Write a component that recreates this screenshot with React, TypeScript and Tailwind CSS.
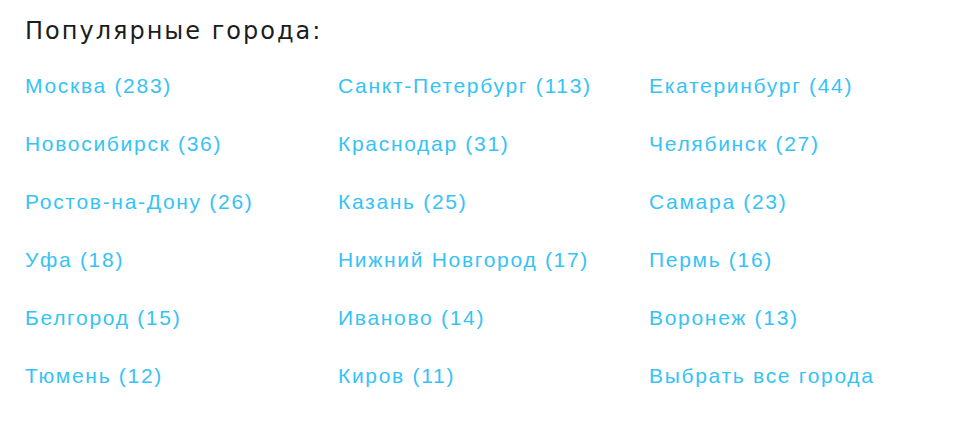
const cities: string[] = [
  "Москва (283)",
  "Санкт-Петербург (113)",
  "Екатеринбург (44)",
  "Новосибирск (36)",
  "Краснодар (31)",
  "Челябинск (27)",
  "Ростов-на-Дону (26)",
  "Казань (25)",
  "Самара (23)",
  "Уфа (18)",
  "Нижний Новгород (17)",
  "Пермь (16)",
  "Белгород (15)",
  "Иваново (14)",
  "Воронеж (13)",
  "Тюмень (12)",
  "Киров (11)",
  "Выбрать все города",
];

export default function App() {
  return (
    <div className="min-h-screen w-full bg-white pl-[25px] pt-[14px]">
      <h2
        className="text-[24px] leading-[34px] text-[#1c1c1c] tracking-[2px]"
        style={{ fontFamily: "'DejaVu Sans', 'Noto Sans', sans-serif" }}
      >
        Популярные города:
      </h2>
      <div
        className="mt-[26px] grid grid-cols-[313px_311px_1fr]"
        style={{ fontFamily: "'Liberation Sans', Arial, sans-serif" }}
      >
        {cities.map((c) => (
          <a
            key={c}
            href="#"
            className="h-[58px] text-[21px] leading-[24px] tracking-[1.7px] text-[#35c3f6] hover:underline"
          >
            {c}
          </a>
        ))}
      </div>
    </div>
  );
}
